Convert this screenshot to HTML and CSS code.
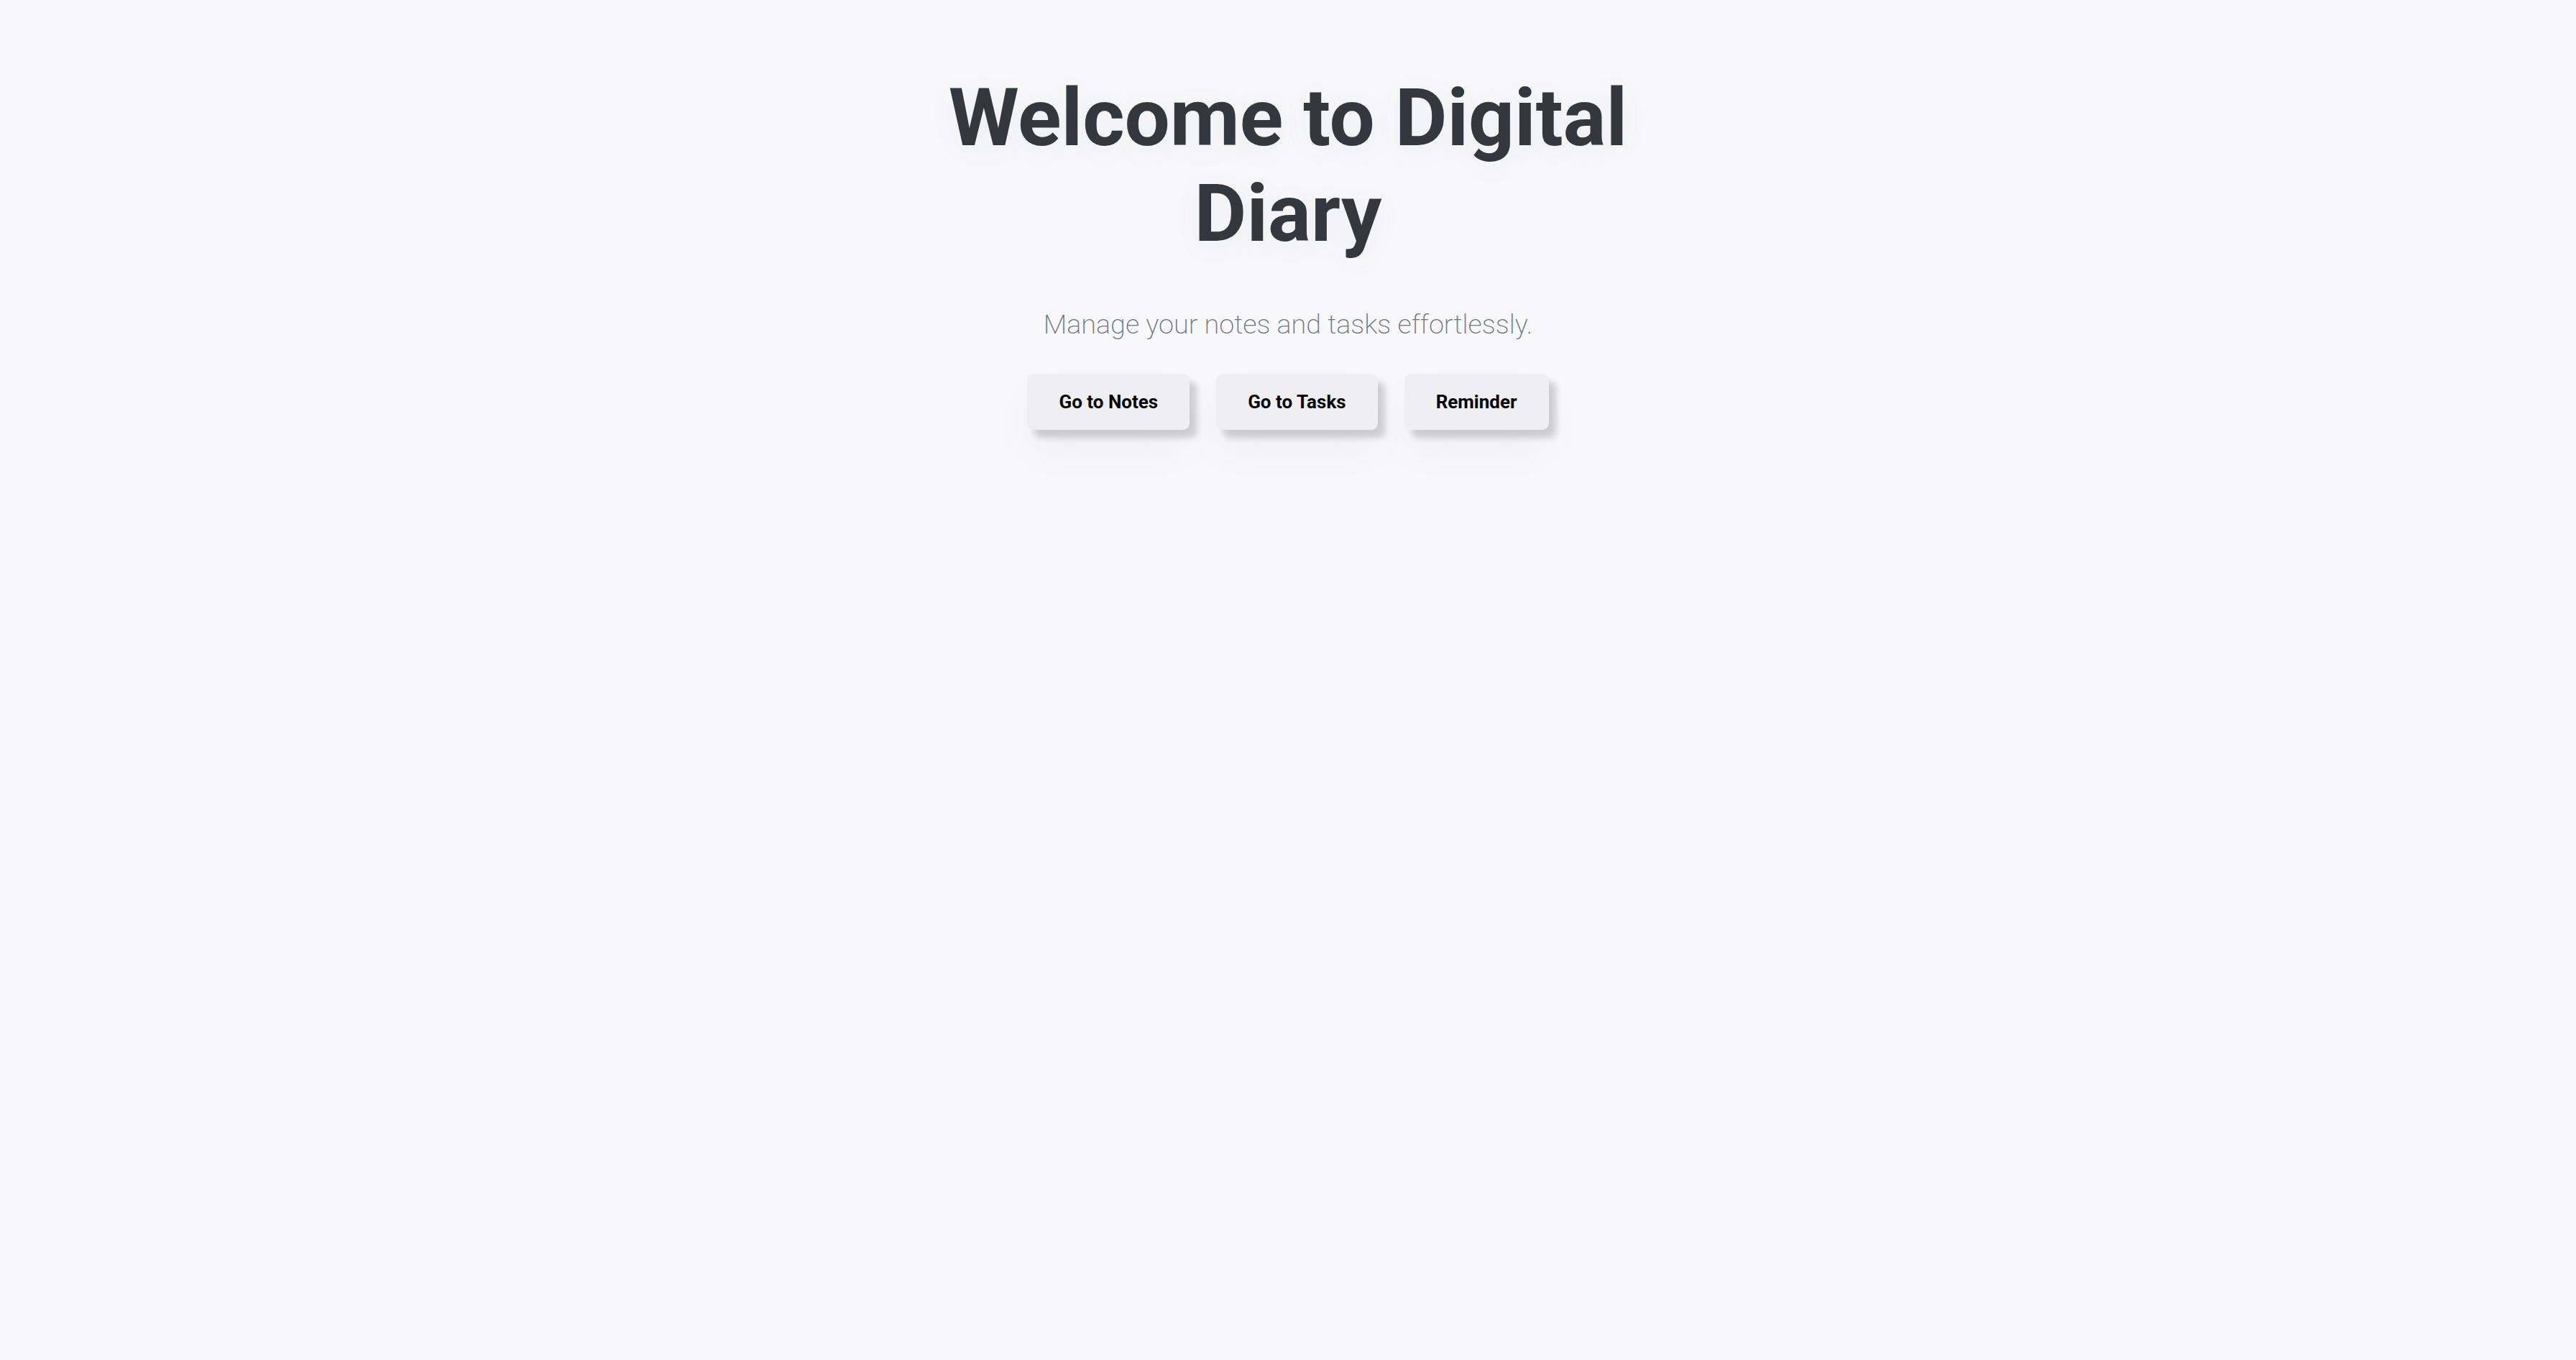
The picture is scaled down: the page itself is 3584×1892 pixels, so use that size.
FILE: index.html
```html
<!DOCTYPE html>
<html lang="en">
<head>
<meta charset="utf-8">
<title>Digital Diary</title>
<link rel="stylesheet" href="styles.css">
</head>
<body>
<main class="hero">
  <h1 class="hero-title">Welcome to Digital<br>Diary</h1>
  <p class="hero-subtitle">Manage your notes and tasks effortlessly.</p>
  <div class="hero-actions">
    <button class="btn" type="button">Go to Notes</button>
    <button class="btn" type="button">Go to Tasks</button>
    <button class="btn" type="button">Reminder</button>
  </div>
</main>
</body>
</html>
```
FILE: styles.css
```css
html, body {
  margin: 0;
  padding: 0;
  background: #f8f8fa;
  min-height: 100%;
}

body {
  font-family: Roboto, "Liberation Sans", Arial, sans-serif;
  min-height: 1892px;
}

.hero {
  display: flex;
  flex-direction: column;
  align-items: center;
  padding-top: 97px;
}

.hero-title {
  margin: 0;
  font-size: 112px;
  font-weight: 700;
  line-height: 133px;
  color: #34373d;
  text-align: center;
  text-shadow: 0 6px 36px rgba(80, 100, 190, 0.07);
}

.hero-subtitle {
  margin: 66px 0 0;
  font-size: 37.8px;
  font-weight: 200;
  line-height: normal;
  color: #6c757d;
}

.hero-actions {
  display: flex;
  gap: 37px;
  margin-top: 47px;
}

.btn {
  font-family: Roboto, "Liberation Sans", Arial, sans-serif;
  font-size: 26px;
  font-weight: 700;
  color: #000;
  background: #efeff1;
  border: none;
  border-radius: 9px;
  padding: 24px 44px;
  line-height: normal;
  box-shadow: 10px 11px 9px rgba(0, 0, 0, 0.16), 0 30px 60px rgba(0, 0, 0, 0.035);
  cursor: pointer;
}
```
